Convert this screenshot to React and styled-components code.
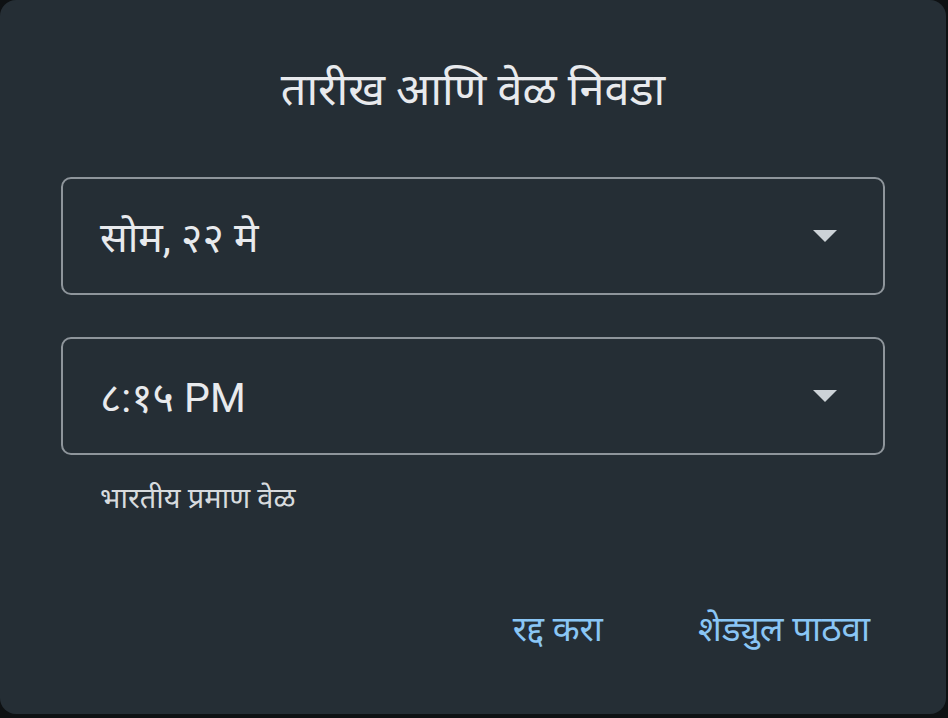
import styled, { createGlobalStyle } from 'styled-components'

const Global = createGlobalStyle`
  html, body {
    margin: 0;
    padding: 0;
    background: #0e1113;
  }
  body {
    font-family: Roboto, "Noto Sans", "Noto Sans Devanagari", sans-serif;
  }
`;

const Dialog = styled.div`
  width: 946px;
  height: 714px;
  box-sizing: border-box;
  background: #252e35;
  border-radius: 16px;
  padding: 60px 61px 0 61px;
  display: flex;
  flex-direction: column;
  color: #e8eaed;
`;

const Title = styled.h2`
  margin: 0;
  font-weight: 400;
  font-size: 45px;
  line-height: 60px;
  text-align: center;
`;

const Fields = styled.div`
  margin-top: 57px;
  display: flex;
  flex-direction: column;
  gap: 42px;
`;

const Field = styled.div`
  height: 118px;
  box-sizing: border-box;
  border: 2px solid #8e959b;
  border-radius: 10px;
  display: flex;
  align-items: center;
  justify-content: space-between;
  padding: 0 46px 0 37px;
  font-size: 41px;
  cursor: pointer;
`;

const Arrow = styled.span`
  width: 0;
  height: 0;
  border-left: 12px solid transparent;
  border-right: 12px solid transparent;
  border-top: 12px solid #cdd3d8;
`;

const Helper = styled.div`
  margin-top: 25px;
  padding-left: 39px;
  font-size: 29px;
  line-height: 36px;
  color: #d7dbde;
`;

const Actions = styled.div`
  margin-top: auto;
  margin-bottom: 62px;
  margin-right: 15px;
  display: flex;
  justify-content: flex-end;
  gap: 95px;
`;

const TextButton = styled.button`
  background: none;
  border: none;
  padding: 0;
  font-family: inherit;
  font-size: 35px;
  line-height: 44px;
  color: #8ac6f5;
  cursor: pointer;
`;

const SelectField = ({ value }) => (
  <Field>
    <span>{value}</span>
    <Arrow />
  </Field>
);

export default function App() {
  return (
    <>
      <Global />
      <Dialog>
        <Title>तारीख आणि वेळ निवडा</Title>
        <Fields>
          <SelectField value="सोम, २२ मे" />
          <SelectField value="८:१५ PM" />
        </Fields>
        <Helper>भारतीय प्रमाण वेळ</Helper>
        <Actions>
          <TextButton>रद्द करा</TextButton>
          <TextButton>शेड्युल पाठवा</TextButton>
        </Actions>
      </Dialog>
    </>
  );
}
